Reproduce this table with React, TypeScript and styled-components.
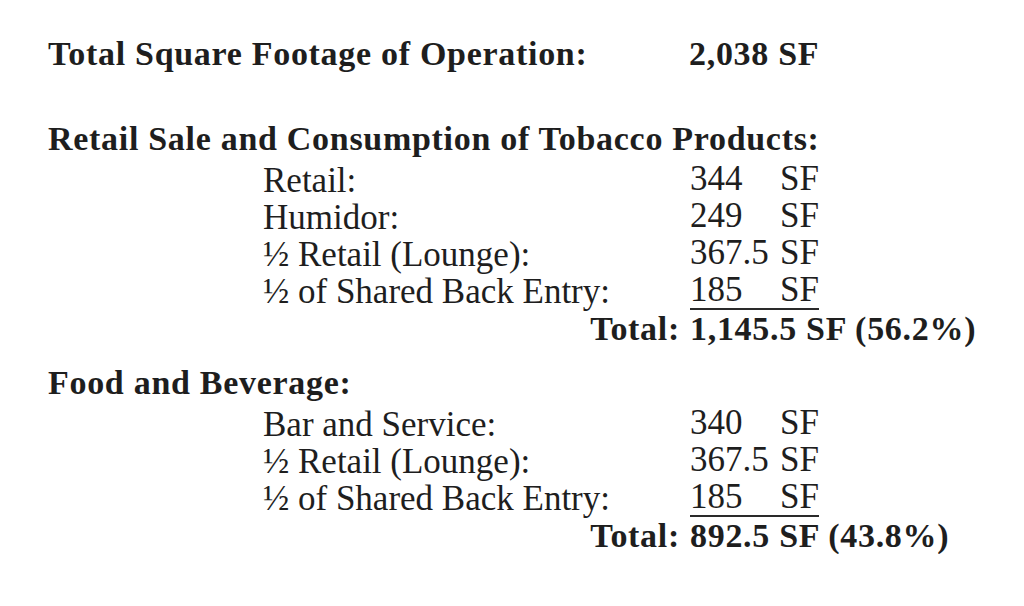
import styled, { createGlobalStyle } from "styled-components";

const GlobalStyle = createGlobalStyle`
  html, body {
    margin: 0;
    padding: 0;
    background: #ffffff;
  }
`;

type Item = { label: string; num: string; underline?: boolean };

const tobacco: Item[] = [
  { label: "Retail:", num: "344" },
  { label: "Humidor:", num: "249" },
  { label: "½ Retail (Lounge):", num: "367.5" },
  { label: "½ of Shared Back Entry:", num: "185", underline: true },
];

const food: Item[] = [
  { label: "Bar and Service:", num: "340" },
  { label: "½ Retail (Lounge):", num: "367.5" },
  { label: "½ of Shared Back Entry:", num: "185", underline: true },
];

const Section: React.FC<{ title: string; items: Item[]; total: string }> = ({
  title,
  items,
  total,
}) => (
  <StyledSection>
    <Heading>{title}</Heading>
    <ItemGrid>
      {items.map((item) => (
        <Row key={item.label}>
          <Label>{item.label}</Label>
          <Value $underline={item.underline}>
            <Num>{item.num}</Num>SF
          </Value>
        </Row>
      ))}
      <Row>
        <TotalLabel>Total:</TotalLabel>
        <TotalValue>{total}</TotalValue>
      </Row>
    </ItemGrid>
  </StyledSection>
);

const App = () => {
  return (
    <>
      <GlobalStyle />
      <Sheet>
        <TopRow>
          <Heading>Total Square Footage of Operation:</Heading>
          <Bold>2,038 SF</Bold>
        </TopRow>
        <Section
          title="Retail Sale and Consumption of Tobacco Products:"
          items={tobacco}
          total="1,145.5 SF (56.2%)"
        />
        <Section title="Food and Beverage:" items={food} total="892.5 SF (43.8%)" />
      </Sheet>
    </>
  );
};

const Sheet = styled.div`
  padding: 35px 0 0 48px;
  font-family: "Liberation Serif", "Times New Roman", serif;
  font-size: 35px;
  line-height: 37px;
  color: #1e1e1e;
`;
const TopRow = styled.div`
  display: grid;
  grid-template-columns: 641px auto;
`;
const StyledSection = styled.section`
  margin-top: 48px;
  & + & {
    margin-top: 17px;
  }
`;
const Bold = styled.div`
  font-weight: 700;
  font-size: 34px;
  letter-spacing: 0.7px;
  white-space: nowrap;
`;
const Heading = styled(Bold)``;
const ItemGrid = styled.div`
  display: grid;
  grid-template-columns: 215px 427px auto;
  margin-top: 5px;
`;
const Row = styled.div`
  display: contents;
`;
const Label = styled.div`
  grid-column: 2;
  white-space: nowrap;
`;
const Value = styled.div<{ $underline?: boolean }>`
  grid-column: 3;
  justify-self: start;
  display: flex;
  white-space: nowrap;
  line-height: 33px;
  height: 37px;
  box-sizing: border-box;
  border-bottom: 2px solid ${(p) => (p.$underline ? "#2a2a2a" : "transparent")};
`;
const Num = styled.span`
  width: 90px;
`;
const TotalLabel = styled(Bold)`
  grid-column: 1 / 3;
  justify-self: end;
  padding-right: 10px;
`;
const TotalValue = styled(Bold)`
  grid-column: 3;
`;

export default App;
